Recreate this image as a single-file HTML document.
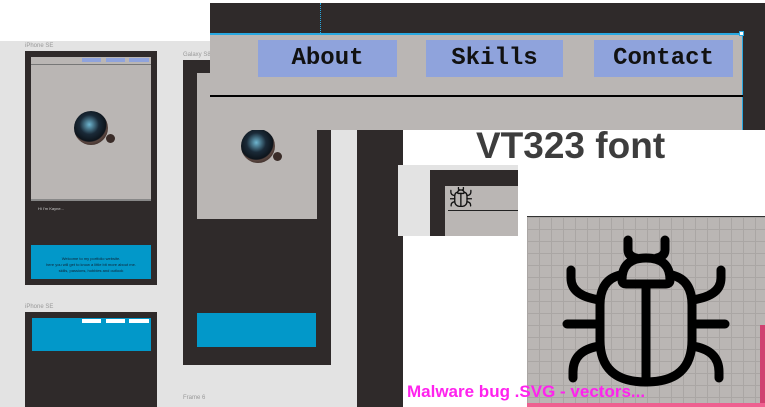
<!DOCTYPE html>
<html><head><meta charset="utf-8"><style>
*{margin:0;padding:0;box-sizing:border-box}
body{width:765px;height:407px;position:relative;overflow:hidden;background:#fff;font-family:"Liberation Sans",sans-serif}
.a{position:absolute}
.dk{background:#2f2a2a}
.gr{background:#bab6b4}
.bl{background:#0298c9}
.lbl{font-size:6px;color:#999}
.cup{position:absolute;width:34px;height:34px;border-radius:50%;background:radial-gradient(circle at 45% 40%,#6fb6d0 0,#1a2a38 35%,#0d141b 60%,#5a4640 64%,#3a2c28 80%,#cbb9b0 100%)}
.cup:after{content:"";position:absolute;right:-7px;bottom:2px;width:9px;height:9px;border-radius:50%;background:#3a2c28}
.nb{position:absolute;top:40px;height:37px;background:#8fa3dc;font-family:"Liberation Mono",monospace;font-weight:bold;font-size:24px;color:#111;text-align:center;line-height:37px}
</style></head><body>
<div class="a" style="left:0;top:41px;width:400px;height:366px;background:#e3e3e3"></div>
<div class="a lbl" style="left:25px;top:43px">iPhone SE</div>
<div class="a dk" style="left:25px;top:51px;width:132px;height:234px"></div>
<div class="a gr" style="left:31px;top:57px;width:120px;height:144px;border-bottom:2px solid #888"></div>
<div class="a" style="left:31px;top:64px;width:120px;height:1px;background:#777"></div>
<div class="a" style="left:82px;top:58px;width:19px;height:4px;background:#8fa3dc"></div>
<div class="a" style="left:106px;top:58px;width:19px;height:4px;background:#8fa3dc"></div>
<div class="a" style="left:129px;top:58px;width:20px;height:4px;background:#8fa3dc"></div>
<div class="cup" style="left:74px;top:111px"></div>
<div class="a" style="left:38px;top:206px;font-size:4px;color:#ccc">Hi I'm Kayne...</div>
<div class="a bl" style="left:31px;top:245px;width:120px;height:34px;font-size:4px;color:#123;text-align:center;padding-top:11px;line-height:6px">Welcome to my portfolio website.<br>here you will get to know a little bit more about me.<br>skills, passions, hobbies and outlook</div>
<div class="a lbl" style="left:25px;top:304px">iPhone SE</div>
<div class="a dk" style="left:25px;top:312px;width:132px;height:95px"></div>
<div class="a bl" style="left:32px;top:318px;width:119px;height:33px"></div>
<div class="a" style="left:82px;top:319px;width:19px;height:4px;background:#fff"></div>
<div class="a" style="left:106px;top:319px;width:19px;height:4px;background:#fff"></div>
<div class="a" style="left:129px;top:319px;width:20px;height:4px;background:#fff"></div>
<div class="a lbl" style="left:183px;top:52px">Galaxy S8</div>
<div class="a dk" style="left:183px;top:60px;width:148px;height:305px"></div>
<div class="a gr" style="left:197px;top:73px;width:120px;height:146px"></div>
<div class="cup" style="left:241px;top:129px"></div>
<div class="a bl" style="left:197px;top:313px;width:119px;height:34px"></div>
<div class="a lbl" style="left:183px;top:395px">Frame 6</div>
<div class="a dk" style="left:357px;top:130px;width:46px;height:277px"></div>
<div class="a dk" style="left:210px;top:3px;width:555px;height:127px"></div>
<div class="a" style="left:320px;top:3px;width:0;height:30px;border-left:1px dotted #29a8e0"></div>
<div class="a gr" style="left:210px;top:33px;width:533px;height:97px;border-top:2px solid #29a8e0;border-right:1px solid #29a8e0"></div>
<div class="a" style="left:739px;top:31px;width:5px;height:5px;background:#fff;border:1px solid #29a8e0"></div>
<div class="nb" style="left:258px;width:139px">About</div>
<div class="nb" style="left:426px;width:137px">Skills</div>
<div class="nb" style="left:594px;width:139px">Contact</div>
<div class="a" style="left:210px;top:95px;width:533px;height:2px;background:#000"></div>
<div class="a" style="left:403px;top:130px;width:362px;height:277px;background:#fff"></div>
<div class="a" style="left:476px;top:125px;font-size:37px;font-weight:bold;color:#3d3d3d">VT323 font</div>
<div class="a" style="left:398px;top:165px;width:120px;height:71px;background:#e3e3e3"></div>
<div class="a dk" style="left:430px;top:170px;width:88px;height:66px"></div>
<div class="a gr" style="left:445px;top:186px;width:73px;height:50px"></div>
<div class="a" style="left:448px;top:210px;width:70px;height:1px;background:#222"></div>
<svg class="a" style="left:450px;top:187px" width="22" height="20" viewBox="565 236 164 150" fill="none" stroke="#111" stroke-width="10" stroke-linecap="round" stroke-linejoin="round">
<path d="M628 240v10q0 6 8 8M665 240v10q0 6-8 8"/>
<path d="M622 280q0-22 24-22q24 0 24 22q0 4-4 4H626q-4 0-4-4z"/>
<path d="M620 275q-20 5-20 30V340q0 42 46 42q46 0 46-42V305q0-25-20-30M646 284v98"/>
<path d="M571 262v12q0 22 29 26M721 262v12q0 22-29 26M567 324h33M692 324h33M573 378v-6q0-22 27-26M719 378v-6q0-22-27-26"/>
</svg>
<div class="a" style="left:527px;top:216px;width:238px;height:191px;background-color:#bab6b4;background-image:linear-gradient(#aaa6a4 1px,transparent 1px),linear-gradient(90deg,#aaa6a4 1px,transparent 1px);background-size:12px 12px;border-top:1px solid #333"></div>
<div class="a" style="left:760px;top:325px;width:5px;height:82px;background:#d04070"></div>
<svg class="a" style="left:527px;top:216px" width="238" height="191" viewBox="527 216 238 191" fill="none" stroke="#000" stroke-width="9" stroke-linecap="round" stroke-linejoin="round">
<path d="M628 240v10q0 6 8 8M665 240v10q0 6-8 8"/>
<path d="M622 280q0-22 24-22q24 0 24 22q0 4-4 4H626q-4 0-4-4z"/>
<path d="M620 275q-20 5-20 30V340q0 42 46 42q46 0 46-42V305q0-25-20-30"/>
<path d="M646 284v98"/>
<path d="M571 270v8q0 18 29 22M721 270v8q0 18-29 22"/>
<path d="M567 324h33M692 324h33"/>
<path d="M573 378v-6q0-22 27-26M719 378v-6q0-22-27-26"/>
</svg>
<div class="a" style="left:527px;top:403px;width:238px;height:4px;background:#ef6090"></div>
<div class="a" style="left:407px;top:382px;font-size:17px;font-weight:bold;color:#ff22ee">Malware bug .SVG - vectors...</div>
</body></html>
